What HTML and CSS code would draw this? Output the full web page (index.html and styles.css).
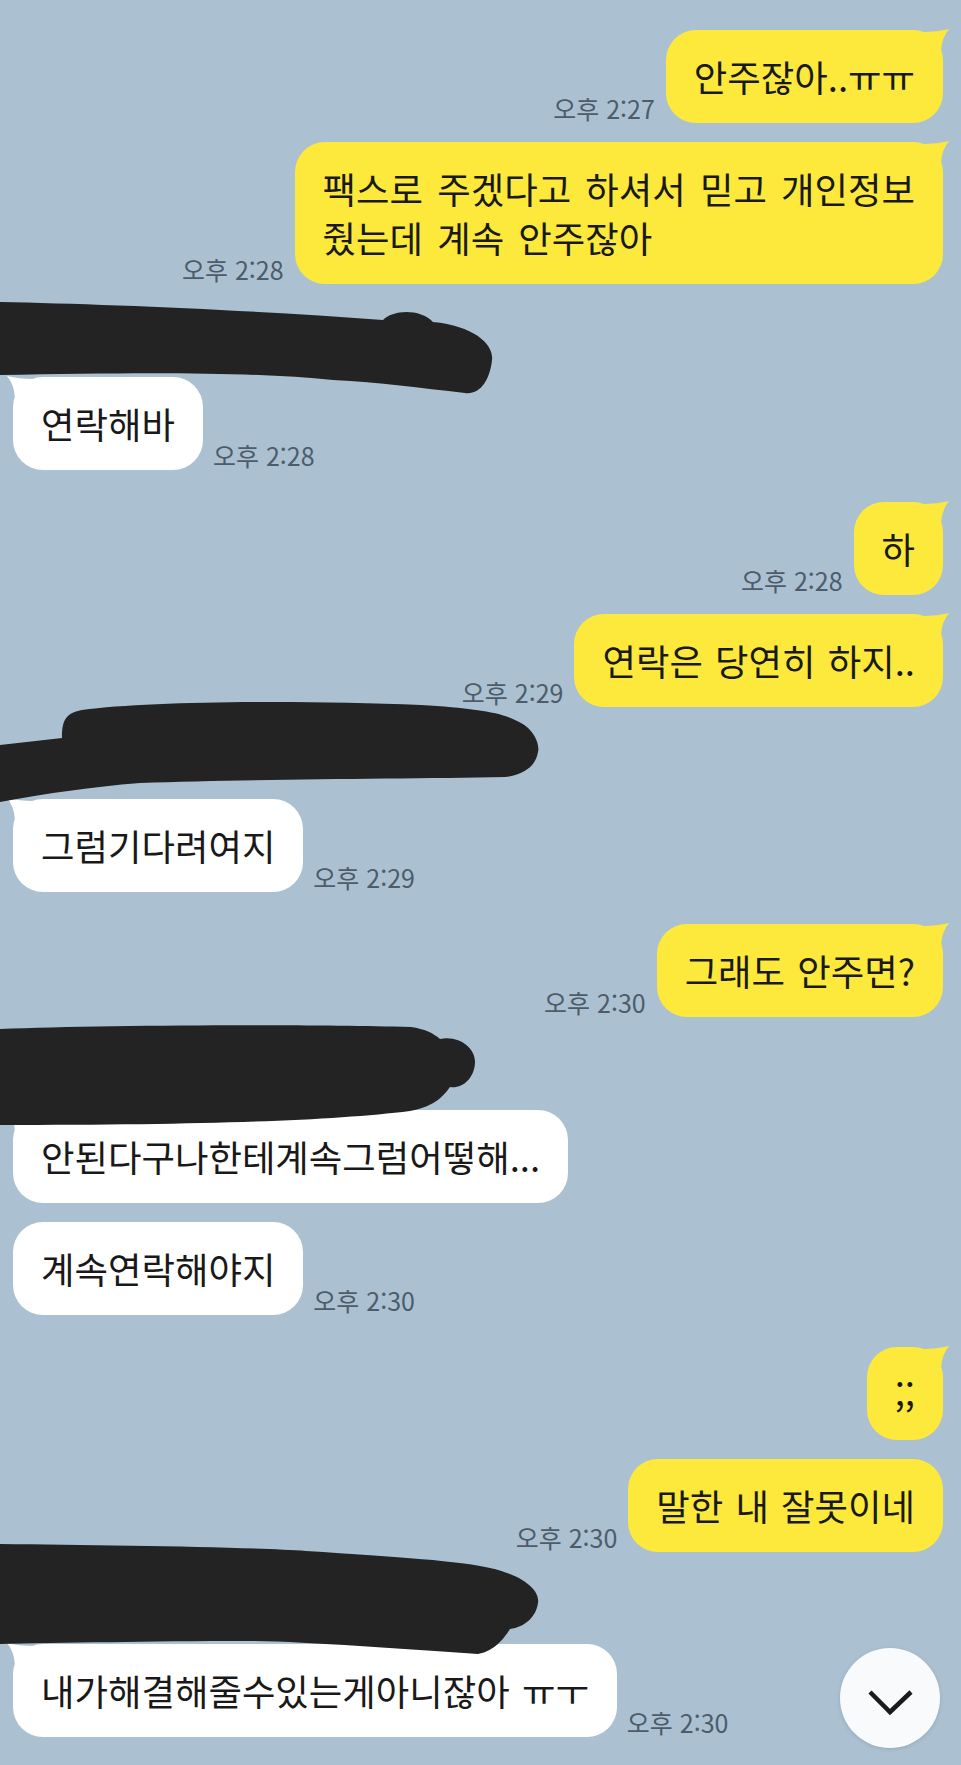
FILE: index.html
```html
<!DOCTYPE html>
<html lang="ko">
<head>
  <meta charset="UTF-8">
  <meta name="viewport" content="width=device-width, initial-scale=1.0">
  <title>채팅</title>
  <link rel="stylesheet" href="styles.css">
</head>
<body>
  <div class="chat">
    <div class="row mine first">
      <span class="time">오후 2:27</span>
      <div class="bubble tail">안주잖아..ㅠㅠ</div>
    </div>
    <div class="row mine">
      <span class="time">오후 2:28</span>
      <div class="bubble tail spaced">팩스로 주겠다고 하셔서 믿고 개인정보<br>줬는데 계속 안주잖아</div>
    </div>

    <!-- name covered with marker -->
    <div class="sender s1">
      <svg class="ink" width="500" height="100" viewBox="0 0 500 100">
        <path d="M0 2 C100 4 250 10 383 20 C392 10 420 8 433 22 C475 26 494 45 492 60 C490 80 480 95 465 93 C420 88 380 82 333 80 C250 72 150 72 0 75 Z"/>
      </svg>
    </div>
    <div class="row theirs">
      <div class="bubble tail">연락해바</div>
      <span class="time">오후 2:28</span>
    </div>

    <div class="row mine group">
      <span class="time">오후 2:28</span>
      <div class="bubble tail">하</div>
    </div>
    <div class="row mine">
      <span class="time">오후 2:29</span>
      <div class="bubble tail">연락은 당연히 하지..</div>
    </div>

    <div class="sender s2">
      <svg class="ink" width="545" height="112" viewBox="0 0 545 112">
        <path d="M0 50 L62 43 C62 28 64 18 82 15 C150 6 300 5 421 10 C470 13 500 17 515 25 C535 33 540 50 538 57 C536 70 525 80 505 82 C400 84 250 84 140 88 C90 92 50 98 0 107 Z"/>
      </svg>
    </div>
    <div class="row theirs">
      <div class="bubble tail">그럼기다려여지</div>
      <span class="time">오후 2:29</span>
    </div>

    <div class="row mine group">
      <span class="time">오후 2:30</span>
      <div class="bubble tail">그래도 안주면?</div>
    </div>

    <div class="sender s3">
      <svg class="ink" width="480" height="110" viewBox="0 0 480 110">
        <path d="M0 8 C100 4 300 3 411 6 C425 8 433 12 440 18 C460 14 476 28 475 42 C474 58 462 68 450 66 C440 80 430 86 410 90 C330 100 200 104 0 104 Z"/>
      </svg>
    </div>
    <div class="row theirs">
      <div class="bubble tail">안된다구나한테계속그럼어떻해...</div>
    </div>
    <div class="row theirs">
      <div class="bubble">계속연락해야지</div>
      <span class="time">오후 2:30</span>
    </div>

    <div class="row mine group">
      <div class="bubble tail">;;</div>
    </div>
    <div class="row mine">
      <span class="time">오후 2:30</span>
      <div class="bubble">말한 내 잘못이네</div>
    </div>

    <div class="sender s4">
      <svg class="ink" width="545" height="116" viewBox="0 0 545 116">
        <path d="M0 3 C100 4 250 6 306 10 C400 16 460 20 490 27 C525 35 540 50 538 62 C536 76 525 86 510 88 C505 96 495 110 478 113 C400 108 300 100 245 100 C150 100 60 102 0 103 Z"/>
      </svg>
    </div>
    <div class="row theirs">
      <div class="bubble tail">내가해결해줄수있는게아니잖아 ㅠㅜ</div>
      <span class="time">오후 2:30</span>
    </div>
  </div>

  <button class="scroll-down" aria-label="맨 아래로">
    <svg width="100" height="100" viewBox="0 0 100 100">
      <polyline points="30,44 50,64 71,44" fill="none" stroke="#1b1b1b" stroke-width="4.5"/>
    </svg>
  </button>
</body>
</html>
```

FILE: styles.css
```css
body {
  margin: 0;
  padding: 0;
  background-color: #abc1d1;
  font-family: "Noto Sans CJK KR", "Noto Sans", sans-serif;
  color: #191919;
}

.chat {
  display: flex;
  flex-direction: column;
  padding: 30px 18px 0 13px;
}

.row {
  display: flex;
  align-items: flex-end;
  margin-top: 19px;
}

.row.first {
  margin-top: 0;
}

.row.group {
  margin-top: 32px;
}

.mine {
  justify-content: flex-end;
  gap: 11px;
}

.theirs {
  justify-content: flex-start;
  gap: 10px;
}

.sender + .row {
  margin-top: 0;
}

.bubble {
  position: relative;
  padding: 22px 28px;
  font-size: 36.4px;
  line-height: 49px;
  border-radius: 30px;
  white-space: nowrap;
  word-spacing: 2px;
}

.bubble.spaced {
  word-spacing: 4px;
}

.mine .bubble {
  background-color: #fde93b;
}

.theirs .bubble {
  background-color: #ffffff;
}

/* little speech tails */
.bubble.tail::after {
  content: "";
  position: absolute;
  top: -1px;
  width: 26px;
  height: 22px;
  background: inherit;
}

.mine .bubble.tail::after {
  right: -6px;
  clip-path: path("M0 3 Q14 3 26 0 Q19 8 18 22 L0 22 Z");
}

.theirs .bubble.tail::after {
  left: -6px;
  clip-path: path("M26 3 Q12 3 0 0 Q7 8 8 22 L26 22 Z");
}

.time {
  font-size: 25px;
  line-height: 28px;
  color: #4d5c6a;
  margin-bottom: 1px;
  white-space: nowrap;
}

/* marker strokes over the names */
.sender {
  margin-left: -13px;
}

.ink {
  display: block;
  position: relative;
  z-index: 1;
  fill: #232323;
}

.s1 {
  margin-top: 18px;
  height: 75px;
}

.s1 .ink {
  margin-top: -2px;
}

.s2 {
  margin-top: -9px;
  height: 101px;
}

.s2 .ink {
  margin-top: -3px;
}

.s3 {
  margin-top: 4px;
  height: 89px;
}

.s4 {
  margin-top: -11px;
  height: 103px;
}

.scroll-down {
  position: fixed;
  right: 21px;
  bottom: 17px;
  width: 100px;
  height: 100px;
  padding: 0;
  border: none;
  border-radius: 50%;
  background-color: #f9fafc;
  box-shadow: 0 1px 4px rgba(0, 0, 0, 0.12);
  cursor: pointer;
}

.scroll-down svg {
  display: block;
}
```
